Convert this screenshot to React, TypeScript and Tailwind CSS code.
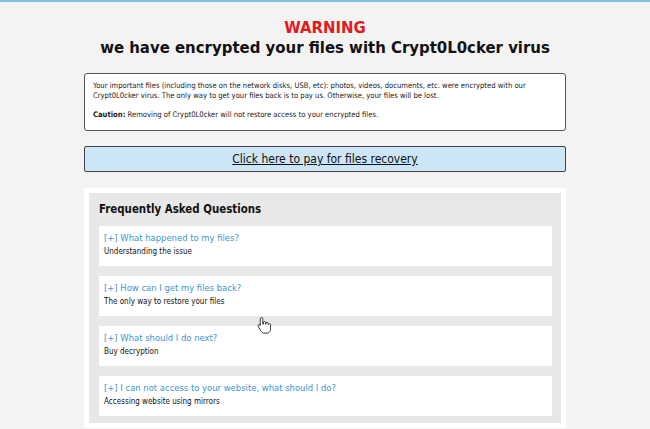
import React from 'react';

const faqs = [
  { q: 'What happened to my files?', a: 'Understanding the issue' },
  { q: 'How can I get my files back?', a: 'The only way to restore your files' },
  { q: 'What should I do next?', a: 'Buy decryption' },
  { q: 'I can not access to your website, what should I do?', a: 'Accessing website using mirrors' },
];

const font = { fontFamily: '"DejaVu Sans Condensed", "DejaVu Sans", sans-serif' };

const HandCursor = () => (
  <svg width="14" height="18" viewBox="0 0 14 18" className="absolute left-[257px] top-[314px]">
    <path
      d="M4.5 1.5c.8 0 1.3.5 1.3 1.3v5.4l.6-.1V6.6c0-.7.5-1.1 1.1-1.1s1.1.4 1.1 1.1v1.6h.5v-.9c0-.6.5-1 1.1-1s1 .4 1 1v1.2h.4c0-.5.4-.9 1-.9s1 .4 1 1v4.2c0 1.8-1.1 3.6-2.6 4.3H6c-.9-.6-2-2-2.8-3.3L1.2 10.3c-.4-.6-.2-1.2.3-1.5.5-.3 1.1-.1 1.5.4l.3.4V2.8c0-.8.5-1.3 1.2-1.3z"
      fill="#fff"
      stroke="#222"
      strokeWidth="0.9"
    />
  </svg>
);

export default function App() {
  return (
    <div className="relative w-[650px] h-[429px] overflow-hidden bg-[#f3f3f3] border-t-2 border-[#7ec0dd]" style={font}>
      <div className="w-[482px] mx-auto">
        <div className="pt-[16px] text-center font-bold text-[16.6px] leading-[20px] text-[#e11b1b]">WARNING</div>
        <div className="text-center font-bold text-[16.6px] leading-[20px] text-[#111] whitespace-nowrap">
          we have encrypted your files with Crypt0L0cker virus
        </div>

        <div className="mt-[15px] bg-white border border-[#555] rounded-[3px] px-[8px] pt-[7px] pb-[10px] text-[7.6px] leading-[10px] text-[#222]">
          <p>
            Your important files (including those on the network disks, USB, etc): photos, videos, documents, etc. were encrypted with our
            Crypt0L0cker virus. The only way to get your files back is to pay us. Otherwise, your files will be lost.
          </p>
          <p className="mt-[9px]">
            <span className="font-bold">Caution:</span> Removing of Crypt0L0cker will not restore access to your encrypted files.
          </p>
        </div>

        <div className="mt-[15px] h-[26px] flex items-center justify-center bg-[#cce6f8] border border-[#444] rounded-[2px]">
          <span className="text-[12px] underline text-[#111]">Click here to pay for files recovery</span>
        </div>

        <div className="mt-[16px] bg-white p-[5px]">
          <div className="bg-[#e8e8e8] pl-[10px] pr-[9px] pb-[7px]">
            <div className="h-[33px] flex items-center pt-[1px] text-[11.4px] font-bold text-[#111]">Frequently Asked Questions</div>
            <div className="flex flex-col gap-[10px]">
              {faqs.map((f) => (
                <div key={f.q} className="bg-white h-[40px] px-[5px] pt-[6px]">
                  <div className="text-[9.4px] leading-[12px] text-[#3a96d0]">[+] {f.q}</div>
                  <div className="mt-[3px] text-[8px] leading-[10px] text-[#111]">{f.a}</div>
                </div>
              ))}
            </div>
          </div>
        </div>
      </div>
      <HandCursor />
    </div>
  );
}
